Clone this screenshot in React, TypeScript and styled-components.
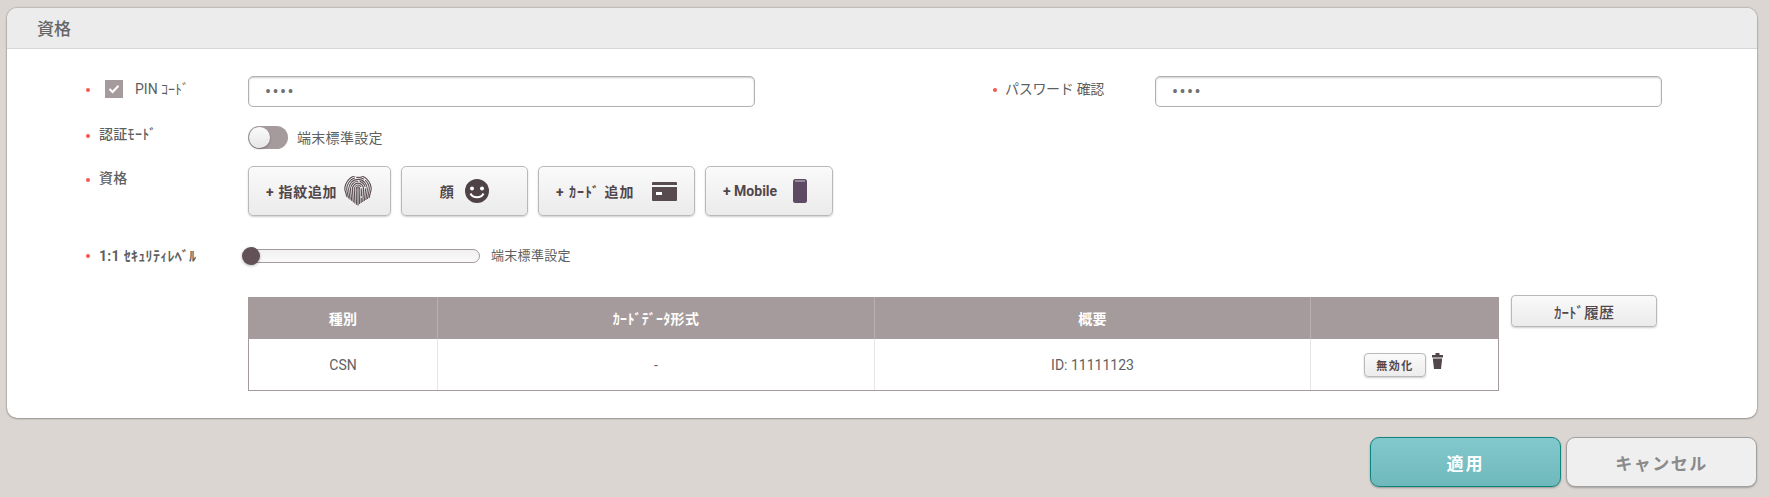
import styled, { createGlobalStyle } from 'styled-components';

const GlobalStyle = createGlobalStyle`
  html, body {
    margin: 0;
    padding: 0;
    background: #dbd6d2;
  }
  body {
    font-family: Roboto, "Noto Sans CJK JP", sans-serif;
    color: #5e5f61;
    font-size: 14px;
  }
  * {
    box-sizing: border-box;
  }
`;

const Page = styled.div`
  width: 1769px;
  height: 497px;
  padding: 8px 12px 0 7px;
  overflow: hidden;
`;

const Panel = styled.section`
  height: 410px;
  background: #fff;
  border-radius: 10px;
  box-shadow: 0 0 2px rgba(0, 0, 0, 0.45), 0 1px 2px rgba(0, 0, 0, 0.2);
  overflow: hidden;
`;

const PanelHeader = styled.h2`
  height: 41px;
  margin: 0;
  padding: 0 0 0 30px;
  background: #ececec;
  border-bottom: 1px solid #d6d6d6;
  font-size: 17px;
  font-weight: 500;
  line-height: 43px;
  color: #666;
`;

const PanelBody = styled.div`
  padding: 27px 0 0 80px;
`;

const FieldRow = styled.div<{ $top: number; $height: number }>`
  display: grid;
  grid-template-columns: 161px 507px 239px 161px 507px;
  height: ${(p) => p.$height}px;
  margin-top: ${(p) => p.$top}px;
`;

const Label = styled.div<{ $bold?: boolean; $shift: number }>`
  display: flex;
  align-items: flex-start;
  height: 18px;
  margin-top: ${(p) => p.$shift}px;
  font-size: 14px;
  line-height: 18px;
  font-weight: ${(p) => (p.$bold ? 700 : 500)};
  letter-spacing: 0.3px;
  color: #5e5f61;
  white-space: nowrap;
`;

const Required = styled.i<{ $top?: number }>`
  width: 4px;
  height: 4px;
  margin: ${(p) => p.$top ?? 9}px 9px 0 -1px;
  border-radius: 50%;
  background: #f4584c;
  flex: none;
`;

const CheckBox = styled.span`
  display: flex;
  align-items: center;
  justify-content: center;
  width: 18px;
  height: 18px;
  margin: 1px 12px 0 6px;
  background: #a59b9c;
  flex: none;
`;

const PinText = styled.span`
  margin-top: 1px;
  font-weight: 400;
  font-size: 14px;
  letter-spacing: 0;
`;

const PasswordText = styled(PinText)`
  margin-left: -1px;
  letter-spacing: -0.3px;
`;

const TextField = styled.div`
  height: 31px;
  padding: 0 16px;
  border: 1px solid #b0b0b0;
  border-radius: 5px;
  box-shadow: inset 0 1px 2px rgba(0, 0, 0, 0.2);
  font-size: 18px;
  line-height: 30px;
  letter-spacing: 1.4px;
  color: #6f6f71;
`;

const ToggleWrap = styled.div`
  display: flex;
  align-items: center;
  gap: 9px;
  grid-column: 2 / 4;
`;

const ToggleTrack = styled.span`
  position: relative;
  display: block;
  width: 40px;
  height: 23px;
  border-radius: 12px;
  background: #a59b9c;
`;

const ToggleKnob = styled.span`
  position: absolute;
  top: 1px;
  left: 1px;
  width: 21px;
  height: 21px;
  border-radius: 50%;
  background: linear-gradient(#fbfbfb, #e6e6e6);
  box-shadow: 0 1px 2px rgba(0, 0, 0, 0.35);
`;

const ToggleText = styled.span`
  margin-top: -2px;
  font-size: 14px;
  letter-spacing: 0.3px;
  color: #5e5f61;
`;

const ButtonGroup = styled.div`
  display: flex;
  gap: 10px;
  grid-column: 2 / 6;
  align-items: flex-start;
`;

const CredentialButton = styled.button<{
  $width: number;
  $pad: number;
  $gap: number;
  $spacing: number;
  $center?: boolean;
}>`
  display: flex;
  align-items: center;
  justify-content: ${(p) => (p.$center ? 'center' : 'flex-start')};
  gap: ${(p) => p.$gap}px;
  width: ${(p) => p.$width}px;
  height: 50px;
  padding: 0 0 0 ${(p) => p.$pad}px;
  border: 1px solid #b9b9b9;
  border-radius: 5px;
  background: linear-gradient(#fafafa, #ebebeb);
  box-shadow: 0 1px 2px rgba(0, 0, 0, 0.2);
  font-family: inherit;
  font-size: 14px;
  font-weight: 700;
  letter-spacing: ${(p) => p.$spacing}px;
  color: #51474b;
  white-space: nowrap;
`;

const SliderWrap = styled.div`
  display: flex;
  align-items: center;
  gap: 11px;
  margin-left: -4px;
  grid-column: 2 / 4;
  height: 18px;
`;

const SliderTrack = styled.span`
  position: relative;
  display: block;
  width: 236px;
  height: 14px;
  border: 1px solid #a39a9b;
  border-radius: 7px;
  background: linear-gradient(#f1f1f1, #fafafa);
`;

const SliderThumb = styled.span`
  position: absolute;
  top: -3px;
  left: -3px;
  width: 18px;
  height: 18px;
  border-radius: 50%;
  background: #625257;
  box-shadow: 0 1px 3px rgba(0, 0, 0, 0.3);
`;

const SliderText = styled.span`
  margin-top: -3px;
  font-size: 13px;
  letter-spacing: 0.3px;
  color: #5e5f61;
`;

const TableRow = styled.div`
  display: flex;
  align-items: flex-start;
  gap: 12px;
  margin: 30px 0 0 161px;
`;

const DataTable = styled.table`
  width: 1251px;
  margin-top: 2px;
  border-collapse: separate;
  border-spacing: 0;
  table-layout: fixed;
  border: 1px solid #a59b9c;
  border-top: 0;
  font-size: 14px;
`;

const HeadCell = styled.th`
  height: 42px;
  padding: 0;
  background: #a59b9c;
  border-left: 1px solid #b8b0b1;
  color: #fff;
  font-size: 14px;
  font-weight: 700;
  letter-spacing: 0.3px;
  &:first-child {
    border-left: 0;
  }
`;

const BodyCell = styled.td`
  height: 51px;
  padding: 0;
  border-left: 1px solid #e6e6e6;
  text-align: center;
  color: #5e5f61;
  &:first-child {
    border-left: 0;
  }
`;

const ActionWrap = styled.div`
  display: flex;
  align-items: flex-start;
  justify-content: center;
  gap: 6px;
  padding-right: 2px;
`;

const DisableButton = styled.button`
  width: 62px;
  height: 24px;
  padding: 0;
  border: 1px solid #b9b9b9;
  border-radius: 4px;
  background: linear-gradient(#fafafa, #ececec);
  box-shadow: 0 1px 2px rgba(0, 0, 0, 0.2);
  font-family: inherit;
  font-size: 11px;
  font-weight: 700;
  letter-spacing: 1.5px;
  color: #51474b;
`;

const HistoryButton = styled.button`
  width: 146px;
  height: 32px;
  padding: 0;
  border: 1px solid #b9b9b9;
  border-radius: 4px;
  background: linear-gradient(#fafafa, #ebebeb);
  box-shadow: 0 1px 2px rgba(0, 0, 0, 0.2);
  font-family: inherit;
  font-size: 15px;
  font-weight: 500;
  color: #51474b;
`;

const Footer = styled.div`
  display: flex;
  justify-content: flex-end;
  gap: 5px;
  margin-top: 19px;
`;

const ApplyButton = styled.button`
  width: 191px;
  height: 50px;
  border: 1px solid #0e8480;
  border-radius: 9px;
  background: linear-gradient(#82c9cd, #6fb8bc);
  box-shadow: 0 1px 2px rgba(0, 0, 0, 0.3);
  font-family: inherit;
  font-size: 17px;
  font-weight: 700;
  letter-spacing: 2px;
  color: #fff;
`;

const CancelButton = styled.button`
  width: 191px;
  height: 50px;
  border: 1px solid #a0a0a0;
  border-radius: 9px;
  background: #efefef;
  box-shadow: 0 1px 2px rgba(0, 0, 0, 0.25);
  font-family: inherit;
  font-size: 17px;
  font-weight: 700;
  letter-spacing: 1.5px;
  color: #8a8a8a;
`;

const CheckIcon = () => (
  <svg width="12" height="10" viewBox="0 0 12 10">
    <path d="M1.5 5 L4.6 8 L10.5 1.8" fill="none" stroke="#fff" strokeWidth="2" />
  </svg>
);

const FingerprintIcon = () => (
  <svg width="28" height="30" viewBox="0 0 28 30" fill="none" stroke="#5f5357" strokeWidth="1.15">
    {[13.2, 11.3, 9.4, 7.5, 5.6, 3.7, 1.8].map((r, i) => (
      <path
        key={r}
        d={`M${14 - r + r / 6} ${21 + i * 1.3} L${14 - r} 13.5 A${r} ${r + 0.8} 0 0 1 ${14 + r} 13.5 L${14 + r - r / 6} ${
          22 + i
        }`}
        strokeDasharray={i % 2 ? '24 1.5 8 1.5' : undefined}
      />
    ))}
    <path d="M14 12 V29.5" />
  </svg>
);

const FaceIcon = () => (
  <svg width="24" height="24" viewBox="0 0 24 24">
    <circle cx="12" cy="12" r="12" fill="#4f4247" />
    <circle cx="7" cy="9.5" r="2" fill="#fff" />
    <circle cx="17" cy="9.5" r="2" fill="#fff" />
    <path d="M5.5 14.5 C8 19.5 16 19.5 18.5 14.5" fill="none" stroke="#fff" strokeWidth="2" />
  </svg>
);

const CardIcon = () => (
  <svg width="25" height="19" viewBox="0 0 25 19">
    <path d="M1 0 H24 a1 1 0 0 1 1 1 V3 H0 V1 a1 1 0 0 1 1 -1 Z" fill="#584b50" />
    <path d="M0 5 H25 V18 a1 1 0 0 1 -1 1 H1 a1 1 0 0 1 -1 -1 Z" fill="#584b50" />
    <rect x="4" y="10" width="6" height="3" fill="#fff" />
  </svg>
);

const MobileIcon = () => (
  <svg width="14" height="24" viewBox="0 0 14 24">
    <rect width="14" height="24" rx="2.5" fill="#5f4a63" />
    <rect x="2" y="1.5" width="10" height="1" fill="#cfc6d0" />
  </svg>
);

const TrashIcon = () => (
  <svg width="11" height="16" viewBox="0 0 11 16">
    <rect x="3.5" y="0" width="4" height="2" fill="#51474b" />
    <rect x="0" y="2" width="11" height="2.5" fill="#51474b" />
    <path d="M0.8 5.5 H10.2 L9 16 H2 Z" fill="#51474b" />
  </svg>
);

export default function App() {
  return (
    <Page>
      <GlobalStyle />
      <Panel>
        <PanelHeader>資格</PanelHeader>
        <PanelBody>
          <FieldRow $top={0} $height={31}>
            <Label $shift={3}>
              <Required />
              <CheckBox>
                <CheckIcon />
              </CheckBox>
              <PinText>PIN ｺｰﾄﾞ</PinText>
            </Label>
            <TextField>••••</TextField>
            <span />
            <Label $shift={3}>
              <Required />
              <PasswordText>パスワード 確認</PasswordText>
            </Label>
            <TextField>••••</TextField>
          </FieldRow>
          <FieldRow $top={19} $height={23}>
            <Label $shift={-1}>
              <Required />
              認証ﾓｰﾄﾞ
            </Label>
            <ToggleWrap>
              <ToggleTrack>
                <ToggleKnob />
              </ToggleTrack>
              <ToggleText>端末標準設定</ToggleText>
            </ToggleWrap>
          </FieldRow>
          <FieldRow $top={17} $height={50}>
            <Label $shift={3}>
              <Required />
              資格
            </Label>
            <ButtonGroup>
              <CredentialButton $width={143} $pad={17} $gap={7} $spacing={0.7}>
                + 指紋追加
                <FingerprintIcon />
              </CredentialButton>
              <CredentialButton $width={127} $pad={0} $gap={11} $spacing={0.4} $center>
                顔
                <FaceIcon />
              </CredentialButton>
              <CredentialButton $width={157} $pad={17} $gap={17} $spacing={1}>
                + ｶｰﾄﾞ 追加
                <CardIcon />
              </CredentialButton>
              <CredentialButton $width={128} $pad={17} $gap={16} $spacing={0}>
                + Mobile
                <MobileIcon />
              </CredentialButton>
            </ButtonGroup>
          </FieldRow>
          <FieldRow $top={31} $height={18}>
            <Label $bold $shift={0}>
              <Required $top={7} />
              1:1 ｾｷｭﾘﾃｨﾚﾍﾞﾙ
            </Label>
            <SliderWrap>
              <SliderTrack>
                <SliderThumb />
              </SliderTrack>
              <SliderText>端末標準設定</SliderText>
            </SliderWrap>
          </FieldRow>
          <TableRow>
            <DataTable>
              <colgroup>
                <col width="188" />
                <col width="437" />
                <col width="436" />
                <col />
              </colgroup>
              <thead>
                <tr>
                  <HeadCell>種別</HeadCell>
                  <HeadCell>ｶｰﾄﾞﾃﾞｰﾀ形式</HeadCell>
                  <HeadCell>概要</HeadCell>
                  <HeadCell />
                </tr>
              </thead>
              <tbody>
                <tr>
                  <BodyCell>CSN</BodyCell>
                  <BodyCell>-</BodyCell>
                  <BodyCell>ID: 11111123</BodyCell>
                  <BodyCell>
                    <ActionWrap>
                      <DisableButton>無効化</DisableButton>
                      <TrashIcon />
                    </ActionWrap>
                  </BodyCell>
                </tr>
              </tbody>
            </DataTable>
            <HistoryButton>ｶｰﾄﾞ履歴</HistoryButton>
          </TableRow>
        </PanelBody>
      </Panel>
      <Footer>
        <ApplyButton>適用</ApplyButton>
        <CancelButton>キャンセル</CancelButton>
      </Footer>
    </Page>
  );
}
